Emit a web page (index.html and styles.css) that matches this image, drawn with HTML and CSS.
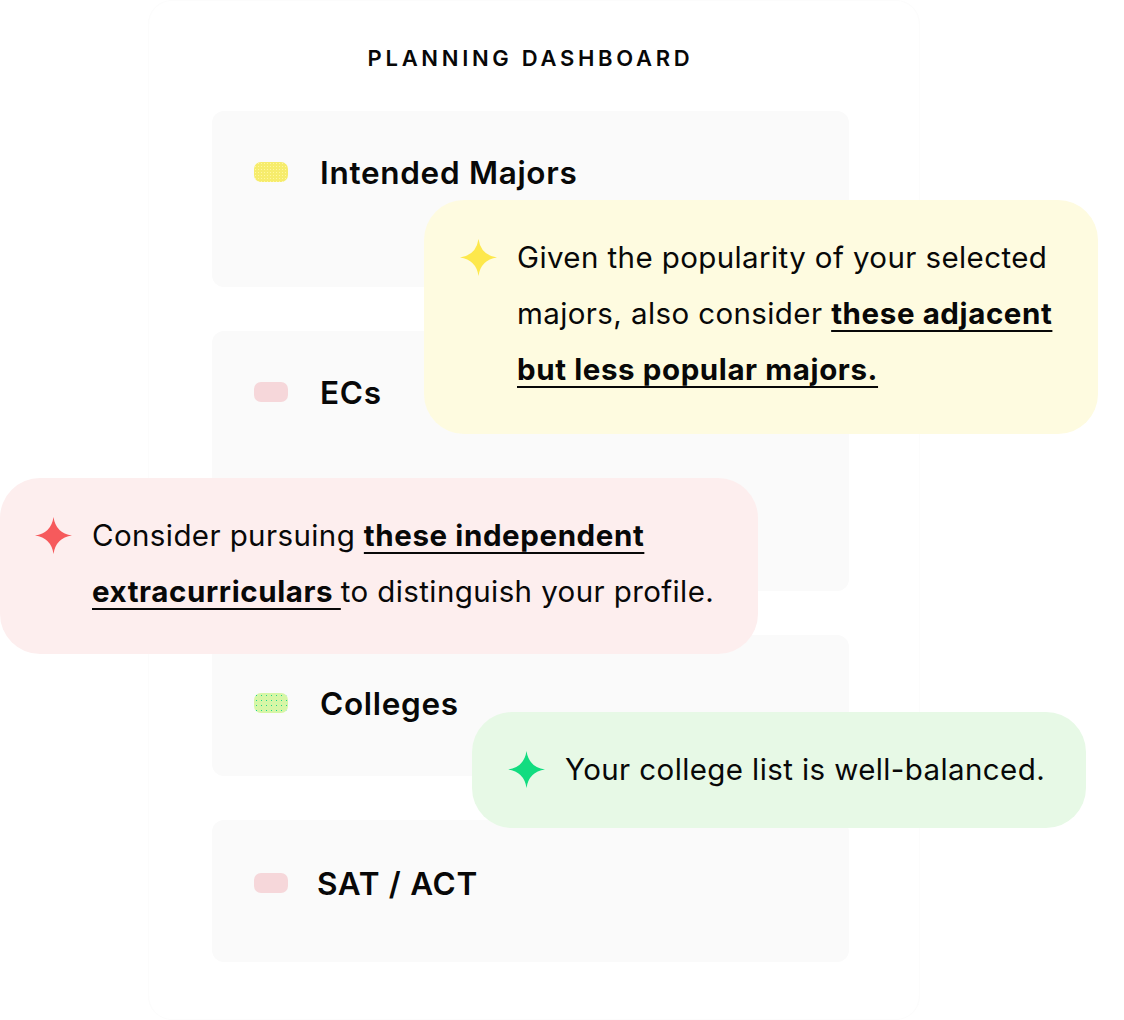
FILE: index.html
```html
<!DOCTYPE html>
<html>
<head>
<meta charset="utf-8">
<link rel="stylesheet" href="styles.css">
</head>
<body>
<div class="stage">
  <div class="panel">
    <h1 class="title">PLANNING DASHBOARD</h1>
    <div class="cards">
      <div class="card card-majors">
        <div class="row"><span class="pill pill-yellow"></span><span class="label">Intended Majors</span></div>
      </div>
      <div class="card card-ecs">
        <div class="row"><span class="pill pill-pink"></span><span class="label">ECs</span></div>
      </div>
      <div class="card card-colleges">
        <div class="row"><span class="pill pill-green"></span><span class="label">Colleges</span></div>
      </div>
      <div class="card card-sat">
        <div class="row"><span class="pill pill-pink"></span><span class="label">SAT / ACT</span></div>
      </div>
    </div>
  </div>

  <div class="bubble bubble-yellow">
    <svg class="spark" viewBox="0 0 40 40"><path d="M20 0 Q22.5 17.5 40 20 Q22.5 22.5 20 40 Q17.5 22.5 0 20 Q17.5 17.5 20 0 Z" fill="#fde84c"/></svg>
    <p class="btext">Given the popularity of your selected majors, also consider <a class="blink">these adjacent but less popular majors.</a></p>
  </div>

  <div class="bubble bubble-red">
    <svg class="spark" viewBox="0 0 40 40"><path d="M20 0 Q22.5 17.5 40 20 Q22.5 22.5 20 40 Q17.5 22.5 0 20 Q17.5 17.5 20 0 Z" fill="#f65a5c"/></svg>
    <p class="btext">Consider pursuing <a class="blink">these independent extracurriculars </a>to distinguish your profile.</p>
  </div>

  <div class="bubble bubble-green">
    <svg class="spark" viewBox="0 0 40 40"><path d="M20 0 Q22.5 17.5 40 20 Q22.5 22.5 20 40 Q17.5 22.5 0 20 Q17.5 17.5 20 0 Z" fill="#12dc80"/></svg>
    <p class="btext">Your college list is well-balanced.</p>
  </div>
</div>
</body>
</html>
```

FILE: styles.css
```css
html, body {
  margin: 0;
  padding: 0;
  background: #ffffff;
}
body {
  font-family: "Inter", "Roboto", sans-serif;
  color: #080808;
}
.stage {
  position: relative;
  width: 1124px;
  height: 1020px;
  overflow: hidden;
}
.panel {
  margin-left: 148px;
  width: 772px;
  height: 1020px;
  box-sizing: border-box;
  border: 1px solid #fcfcfc;
  border-radius: 24px;
  padding: 0 70px 0 63px;
  background: #ffffff;
}
.title {
  margin: 0;
  padding-top: 44px;
  height: 66px;
  box-sizing: content-box;
  text-align: center;
  font-family: "Inter", sans-serif;
  font-size: 22px;
  font-weight: 600;
  letter-spacing: 3.7px;
  line-height: 26px;
}
.cards {
  display: flex;
  flex-direction: column;
  gap: 44px;
}
.card {
  background: #fafafa;
  border-radius: 12px;
  padding: 43px 42px 0 42px;
  box-sizing: border-box;
}
.card-majors { height: 176px; }
.card-ecs { height: 260px; }
.card-colleges { height: 141px; padding-top: 50px; }
.card-sat { height: 142px; padding-top: 45px; }
.row {
  display: flex;
  align-items: center;
  height: 36px;
}
.pill {
  width: 34px;
  height: 20px;
  border-radius: 7px;
  flex: none;
}
.pill-yellow {
  background-color: #f6ec6c;
  background-image: radial-gradient(circle, #fff7a0 0.8px, transparent 1px);
  background-size: 3px 3px;
}
.pill-pink { background: #f6d7da; }
.pill-green {
  background-color: #d6f6a6;
  background-image: radial-gradient(circle, #1ed88a 0.8px, transparent 1px);
  background-size: 5px 5px;
}
.label {
  margin-left: 32px;
  font-family: "Inter", sans-serif;
  font-size: 31.5px;
  font-weight: 600;
  letter-spacing: 0.7px;
}
.card-sat .label { margin-left: 29px; }

.bubble {
  position: absolute;
  display: flex;
  align-items: flex-start;
  box-sizing: border-box;
  border-radius: 40px;
}
.bubble-yellow {
  left: 424px;
  top: 200px;
  width: 674px;
  height: 234px;
  background: #fefbe0;
  padding: 29px 14px 0 36px;
}
.bubble-red {
  left: 0;
  top: 478px;
  width: 758px;
  height: 176px;
  background: #fdeeee;
  padding: 29px 14px 0 35px;
}
.bubble-green {
  left: 472px;
  top: 712px;
  width: 614px;
  height: 116px;
  background: #e7f9e6;
  padding: 29px 14px 0 36px;
}
.spark {
  width: 37px;
  height: 39px;
  flex: none;
  margin-top: 9px;
}
.btext {
  margin: 0 0 0 20px;
  font-family: "Inter", sans-serif;
  font-size: 29.5px;
  font-weight: 400;
  line-height: 56px;
  letter-spacing: 0.4px;
}
.blink {
  font-weight: 700;
  letter-spacing: 0.6px;
  text-decoration: underline;
  text-decoration-thickness: 2px;
  text-underline-offset: 6px;
  color: #080808;
}
```
